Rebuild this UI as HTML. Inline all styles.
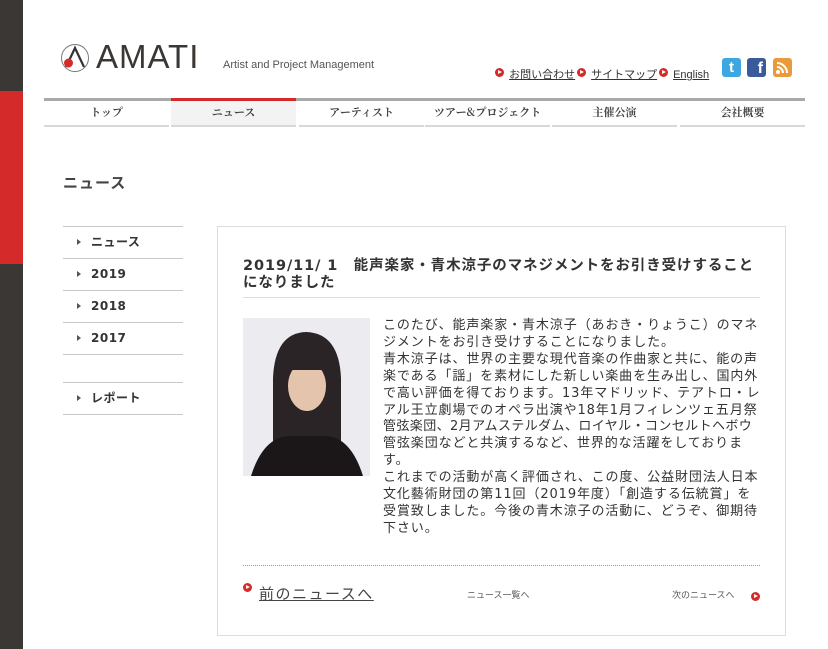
<!DOCTYPE html>
<html><head><meta charset="utf-8"><style>
*{margin:0;padding:0;box-sizing:border-box}
body{width:828px;height:649px;overflow:hidden;background:#fff;font-family:"DejaVu Sans","Noto Sans CJK JP",sans-serif;color:#333;position:relative}
.lb{position:absolute;left:0;top:0;width:23px;height:649px;background:#3b3735}
.lr{position:absolute;left:0;top:91px;width:23px;height:173px;background:#d42a2a}
.a{position:absolute}
.nav{position:absolute;left:44px;top:98px;width:761px;height:3px;background:#a9a9a9}
.ni{position:absolute;top:101px;height:26px;width:125px;border-bottom:2px solid #d8d8d8;text-align:center;font:bold 11px/23px "Noto Serif CJK SC",serif;color:#444}
.side{position:absolute;left:63px;width:120px;border-top:1px solid #c8c8c8}
.si{height:32px;border-bottom:1px solid #c8c8c8;font-size:12px;font-weight:bold;line-height:31px;padding-left:28px;position:relative;color:#333;letter-spacing:0.5px}
.si:before{content:"";position:absolute;left:14px;top:12px;border-left:4px solid #555;border-top:3px solid transparent;border-bottom:3px solid transparent}
.dot{display:inline-block;width:9px;height:9px;border-radius:50%;background:#d42a2a;vertical-align:1px;position:relative}
.dot:after{content:"";position:absolute;left:3px;top:2px;border-left:4px solid #fff;border-top:2.5px solid transparent;border-bottom:2.5px solid transparent}
.tl{font-family:"Liberation Sans","Noto Sans CJK JP",sans-serif;font-size:11px;color:#333;text-decoration:underline}
.bt{left:383px;top:318px;font-size:13px;line-height:16.9px;color:#333;letter-spacing:0.9px;white-space:nowrap}
.bt .s{letter-spacing:0.4px}
</style></head><body>
<div class="lb"></div><div class="lr"></div>
<svg class="a" style="left:60px;top:43px" width="30" height="30" viewBox="0 0 30 30"><circle cx="15" cy="15" r="13.5" fill="none" stroke="#777" stroke-width="1"/><path d="M6 24 L15 5 L24 24" fill="none" stroke="#333" stroke-width="2.2"/><circle cx="8.5" cy="20" r="4.5" fill="#d42a2a"/></svg>
<div class="a" style="left:96px;top:38px;font-family:'Liberation Sans',sans-serif;font-size:33px;color:#3b3735;letter-spacing:1px">AMATI</div>
<div class="a" style="left:223px;top:59px;font-family:'Liberation Sans',sans-serif;font-size:11px;color:#555">Artist and Project Management</div>
<div class="a" style="left:495px;top:63px"><span class="dot"></span> <span class="tl">お問い合わせ</span></div>
<div class="a" style="left:577px;top:63px"><span class="dot"></span> <span class="tl">サイトマップ</span></div>
<div class="a" style="left:659px;top:63px"><span class="dot"></span> <span class="tl">English</span></div>
<div class="a" style="left:722px;top:58px;width:19px;height:19px;background:#3ea6e0;border-radius:3px;color:#fff;font:bold 15px/19px sans-serif;text-align:center">t</div>
<div class="a" style="left:747px;top:58px;width:19px;height:19px;background:#3b5a9a;border-radius:3px;color:#fff;font:bold 16px/22px sans-serif;text-align:right;padding-right:3px">f</div>
<div class="a" style="left:773px;top:58px;width:19px;height:19px;background:#e99a3a;border-radius:3px"><svg width="19" height="19"><circle cx="5" cy="14" r="2" fill="#fff"/><path d="M4 9a6 6 0 0 1 6 6M4 5a10 10 0 0 1 10 10" stroke="#fff" stroke-width="2" fill="none"/></svg></div>
<div class="nav"></div>
<div class="a" style="left:171px;top:98px;width:125px;height:3px;background:#d42a2a"></div>
<div class="ni" style="left:44px">トップ</div>
<div class="ni" style="left:171px;background:#f3f3f3">ニュース</div>
<div class="ni" style="left:299px">アーティスト</div>
<div class="ni" style="left:425px">ツアー&amp;プロジェクト</div>
<div class="ni" style="left:552px">主催公演</div>
<div class="ni" style="left:680px">会社概要</div>
<div class="a" style="left:63px;top:172px;font-size:15px;font-weight:bold;color:#444;letter-spacing:1px">ニュース</div>
<div class="side" style="top:226px"><div class="si">ニュース</div><div class="si">2019</div><div class="si">2018</div><div class="si">2017</div></div>
<div class="side" style="top:382px"><div class="si">レポート</div></div>
<div class="a" style="left:217px;top:226px;width:569px;height:410px;border:1px solid #ddd"></div>
<div class="a" style="left:243px;top:258px;width:517px;font-size:14.5px;font-weight:bold;line-height:17px;color:#333;letter-spacing:0.9px">2019/11/ 1　能声楽家・青木涼子のマネジメントをお引き受けすることになりました</div>
<div class="a" style="left:243px;top:297px;width:517px;height:1px;background:#ddd"></div>
<svg class="a" style="left:243px;top:318px" width="127" height="158"><rect width="127" height="158" fill="#ecebef"/><path d="M30 158 L30 60 Q32 15 63 14 Q96 15 98 60 L98 158Z" fill="#2a2426"/><ellipse cx="64" cy="68" rx="19" ry="25" fill="#e5c4ae"/><rect x="44" y="36" width="40" height="16" fill="#2a2426"/><path d="M8 158 Q20 120 45 118 L84 118 Q108 120 120 158Z" fill="#1b1718"/></svg>
<div class="a bt">このたび、能声楽家・青木涼子（あおき・りょうこ）のマネ<br>ジメントをお引き受けすることになりました。<br>青木涼子は、世界の主要な現代音楽の作曲家と共に、能の声<br>楽である「謡」を素材にした新しい楽曲を生み出し、国内外<br>で高い評価を得ております。13年マドリッド、テアトロ・レ<br>アル王立劇場でのオペラ出演や18年1月フィレンツェ五月祭<br><span class="s">管弦楽団、2月アムステルダム、ロイヤル・コンセルトヘボウ</span><br>管弦楽団などと共演するなど、世界的な活躍をしておりま<br>す。<br>これまでの活動が高く評価され、この度、公益財団法人日本<br>文化藝術財団の第11回（2019年度）「創造する伝統賞」を<br>受賞致しました。今後の青木涼子の活動に、どうぞ、御期待<br>下さい。</div>
<div class="a" style="left:243px;top:565px;width:517px;border-top:1px dotted #999"></div>
<div class="a" style="left:243px;top:581px"><span class="dot" style="vertical-align:top;margin-top:2px"></span></div>
<div class="a" style="left:259px;top:583px;font-size:15px;color:#444;text-decoration:underline;letter-spacing:1.5px">前のニュースへ </div>
<div class="a" style="left:467px;top:588px;font-size:9px;color:#555">ニュース一覧へ</div>
<div class="a" style="left:672px;top:588px;font-size:9px;color:#555">次のニュースへ</div>
<div class="a" style="left:751px;top:587px"><span class="dot"></span></div>
</body></html>
